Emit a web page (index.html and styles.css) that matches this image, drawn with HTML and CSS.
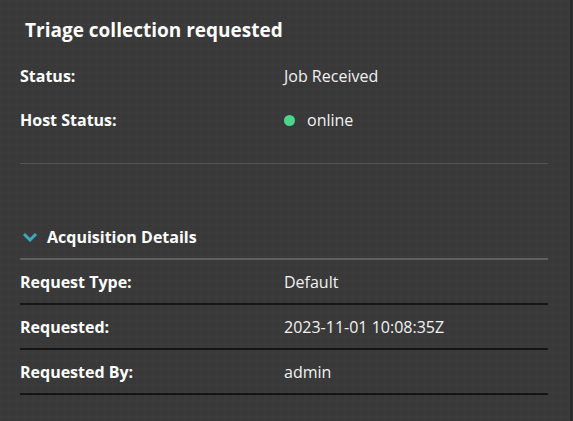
FILE: index.html
```html
<!DOCTYPE html>
<html lang="en">
<head>
    <meta charset="UTF-8">
    <meta name="viewport" content="width=device-width, initial-scale=1.0">
    <title>Triage collection requested</title>
    <link rel="stylesheet" href="styles.css">
</head>
<body>
    <div class="panel">
        <h2 class="title">Triage collection requested</h2>

        <div class="summary">
            <div class="row">
                <div class="label">Status:</div>
                <div class="value">Job Received</div>
            </div>
            <div class="row">
                <div class="label">Host Status:</div>
                <div class="value"><span class="dot"></span>online</div>
            </div>
        </div>

        <div class="section">
            <div class="section-head">
                <svg class="chevron" width="16" height="10" viewBox="0 0 16 10">
                    <polyline points="2,2 8,8 14,2" fill="none" stroke="#3ba9bb" stroke-width="3"/>
                </svg>
                Acquisition Details
            </div>
            <div class="row lined">
                <div class="label">Request Type:</div>
                <div class="value">Default</div>
            </div>
            <div class="row lined">
                <div class="label">Requested:</div>
                <div class="value">2023-11-01 10:08:35Z</div>
            </div>
            <div class="row lined">
                <div class="label">Requested By:</div>
                <div class="value">admin</div>
            </div>
        </div>
    </div>
    <div class="edge"></div>
</body>
</html>
```

FILE: styles.css
```css
html, body {
    height: 100%;
}

body {
    margin: 0;
    font-family: "Open Sans", "Noto Sans", sans-serif;
    font-size: 16px;
    color: #f2f2f2;
    background-color: #393939;
    background-image:
        linear-gradient(rgba(255, 255, 255, 0.012) 1px, transparent 1px),
        linear-gradient(90deg, rgba(255, 255, 255, 0.012) 1px, transparent 1px);
    background-size: 8px 8px;
    display: flex;
    overflow: hidden;
}

.panel {
    width: 528px;
    padding: 0 22px 0 20px;
}

.edge {
    width: 3px;
    background: #2b2b2b;
}

.title {
    margin: 0;
    padding: 17px 0 0 5px;
    height: 37px;
    font-size: 19px;
    font-weight: 700;
    line-height: 26px;
    color: #fff;
}

.summary {
    border-bottom: 1px solid #555;
    padding-bottom: 21px;
}

.row {
    display: grid;
    grid-template-columns: 264px 1fr;
    align-items: center;
    height: 44px;
}

.label {
    font-weight: 700;
    color: #fff;
}

.value {
    display: flex;
    align-items: center;
}

.dot {
    width: 11px;
    height: 11px;
    border-radius: 50%;
    background: #4dd68b;
    margin-right: 12px;
}

.section {
    margin-top: 51px;
}

.section-head {
    display: flex;
    align-items: center;
    height: 43px;
    border-bottom: 2px solid #5f5f5f;
    font-size: 16px;
    font-weight: 700;
    color: #fff;
}

.chevron {
    margin: 0 9px 0 2px;
}

.row.lined {
    height: 43px;
    border-bottom: 2px solid #151515;
}
```
